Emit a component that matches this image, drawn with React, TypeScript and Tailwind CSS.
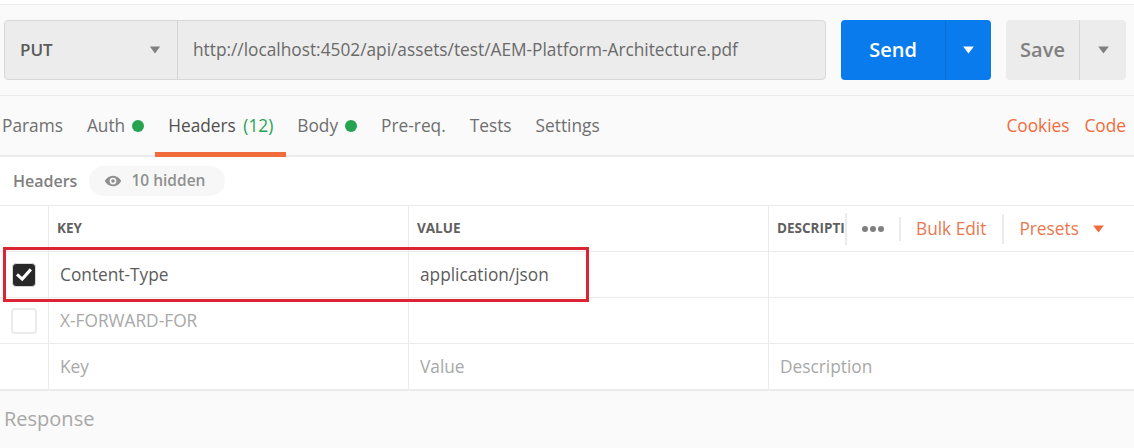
import React from "react";

const Caret = ({ className }: { className: string }) => (
  <svg viewBox="0 0 14 9" className={className} fill="currentColor"><path d="M1 0.5h12L7 8.5z" /></svg>
);

const Tab = ({ label, dot, className = "text-[#6f6f6f]" }: { label: string; dot?: boolean; className?: string }) => (
  <div className={`flex items-center gap-[7px] ${className}`}>
    <span>{label}</span>
    {dot && <span className="w-3 h-3 rounded-full bg-[#26a34f]" />}
  </div>
);

const Row = ({ h, children, border = "border-b border-[#ebebeb]" }: { h: string; children: React.ReactNode; border?: string }) => (
  <div className={`grid grid-cols-[49px_360px_360px_1fr] ${h} ${border}`}>{children}</div>
);

const Cell = ({ children, className = "" }: { children?: React.ReactNode; className?: string }) => (
  <div className={`flex items-center border-r border-[#ebebeb] last:border-r-0 ${className}`}>{children}</div>
);

export default function App() {
  return (
    <div className="w-[1134px] h-[448px] overflow-hidden relative bg-white text-[18px] font-['Open_Sans',sans-serif] text-[#505050]">
      <div className="h-[5px] border-b border-[#ebebeb] bg-white" />
      <div className="h-[91px] bg-[#fafafa] border-b border-[#ebebeb] flex items-center pl-1 pr-2">
        <div className="flex h-[60px] w-[822px] rounded-[4px] border border-[#d8d8d8] bg-[#ececec]">
          <div className="w-[173px] shrink-0 flex items-center justify-between pl-[15px] pr-[16px] border-r border-[#d4d4d4] font-semibold text-[#5a5a5a] text-[17px]">
            <span>PUT</span>
            <Caret className="w-3 h-2 text-[#808080]" />
          </div>
          <div className="flex-1 flex items-center pl-[15px] text-[#6a6a6a] text-[17.3px]">
            http://localhost:4502/api/assets/test/AEM-Platform-Architecture.pdf
          </div>
        </div>
        <div className="ml-[15px] flex h-[60px] w-[150px] rounded-[4px] bg-[#097bed] text-white font-semibold text-[20px]">
          <div className="w-[105px] flex items-center justify-center border-r border-[#0a6fd4]">Send</div>
          <div className="flex-1 flex items-center justify-center"><Caret className="w-[13px] h-2 text-white" /></div>
        </div>
        <div className="ml-[15px] flex h-[60px] w-[120px] rounded-[4px] bg-[#ececec] text-[#808080] font-semibold text-[20px]">
          <div className="w-[74px] flex items-center justify-center border-r border-[#d8d8d8]">Save</div>
          <div className="flex-1 flex items-center justify-center"><Caret className="w-[13px] h-2 text-[#808080]" /></div>
        </div>
      </div>
      <div className="h-[61px] bg-[#fafafa] border-b-2 border-[#ebebeb] flex items-center justify-between pl-[2px] pr-2 text-[17.3px]">
        <div className="flex items-center gap-[24px] h-full">
          <Tab label="Params" />
          <Tab label="Auth" dot />
          <div className="h-full flex items-center relative px-[13px] -mx-[13px] text-[#505050]">
            <span>Headers <span className="ml-[3px] text-[#26a34f]">(12)</span></span>
            <span className="absolute left-0 right-0 bottom-[-2px] h-[5px] bg-[#f26b3a]" />
          </div>
          <Tab label="Body" dot />
          <Tab label="Pre-req." />
          <Tab label="Tests" />
          <Tab label="Settings" />
        </div>
        <div className="flex items-center gap-[15px] text-[#f26b3a]">
          <span>Cookies</span>
          <span>Code</span>
        </div>
      </div>
      <div className="h-[49px] border-b border-[#ebebeb] flex items-center pl-[13px]">
        <span className="font-semibold text-[#808080] text-[16px]">Headers</span>
        <div className="ml-[12px] h-[30px] w-[136px] rounded-full bg-[#f7f7f7] flex items-center pl-[15px] gap-[9px] text-[#909090] font-semibold text-[15.5px]">
          <svg viewBox="0 0 24 16" className="w-[18px] h-3" fill="#909090">
            <path fillRule="evenodd" d="M12 1C7 1 3 4 1 8c2 4 6 7 11 7s9-3 11-7c-2-4-6-7-11-7zm0 11.5A4.5 4.5 0 1 1 12 3.500a4.500 4.500 0 0 1 0 9z" />
            <circle cx="12" cy="8" r="2.400" />
          </svg>
          <span>10 hidden</span>
        </div>
      </div>
      <Row h="h-[46px]">
        <Cell />
        <Cell className="pl-2 font-bold text-[13.5px] text-[#606060]">KEY</Cell>
        <Cell className="pl-2 font-bold text-[13.5px] text-[#606060]">VALUE</Cell>
        <Cell className="pl-2 font-bold text-[13.5px] text-[#606060]">
          <span className="w-[68px] overflow-hidden whitespace-nowrap">DESCRIPTION</span>
          <span className="w-[2px] h-8 bg-[#ebebeb]" />
          <span className="ml-[15px] flex gap-[2px]">
            <i className="w-[6px] h-[6px] rounded-full bg-[#808080]" />
            <i className="w-[6px] h-[6px] rounded-full bg-[#808080]" />
            <i className="w-[6px] h-[6px] rounded-full bg-[#808080]" />
          </span>
          <span className="ml-[15px] w-[2px] h-6 bg-[#ebebeb]" />
          <span className="ml-[15px] font-normal text-[17.3px] text-[#e8784f]">Bulk Edit</span>
          <span className="ml-4 w-[2px] h-[30px] bg-[#ebebeb]" />
          <span className="ml-[15px] font-normal text-[17.3px] text-[#e8784f]">Presets</span>
          <Caret className="ml-[13px] w-[13px] h-2 text-[#f26b3a]" />
        </Cell>
      </Row>
      <Row h="h-[46px]">
        <Cell className="justify-center">
          <div className="w-6 h-6 rounded-[4px] bg-[#282828] border border-[#d8d8d8] flex items-center justify-center">
            <svg viewBox="0 0 20 20" className="w-[18px] h-[18px]" fill="none" stroke="white" strokeWidth="3.400" strokeLinecap="square"><path d="M3.500 10.500l4.500 4 8.500-9.500" /></svg>
          </div>
        </Cell>
        <Cell className="pl-[11px] text-[#5c5c5c] text-[17.3px]">Content-Type</Cell>
        <Cell className="pl-[11px] text-[#5c5c5c] text-[17.3px]">application/json</Cell>
        <Cell />
      </Row>
      <Row h="h-[46px]">
        <Cell className="justify-center">
          <div className="w-[26px] h-[26px] rounded-[4px] bg-white border-2 border-[#ebebeb]" />
        </Cell>
        <Cell className="pl-[11px] text-[#a8a8a8] text-[17.3px]">X-FORWARD-FOR</Cell>
        <Cell />
        <Cell />
      </Row>
      <Row h="h-[47px]" border="border-b-2 border-[#ebebeb]">
        <Cell />
        <Cell className="pl-[11px] text-[#a8a8a8] text-[17.3px]">Key</Cell>
        <Cell className="pl-[11px] text-[#a8a8a8] text-[17.3px]">Value</Cell>
        <Cell className="pl-[11px] text-[#a8a8a8] text-[17.3px]">Description</Cell>
      </Row>
      <div className="h-[57px] bg-[#fafafa] pl-1 pt-[13px] text-[#a8a8a8] text-[20px]">Response</div>
      <div className="absolute left-[3px] top-[247px] w-[586px] h-[55px] border-[3px] border-[#dc2433]" />
    </div>
  );
}
